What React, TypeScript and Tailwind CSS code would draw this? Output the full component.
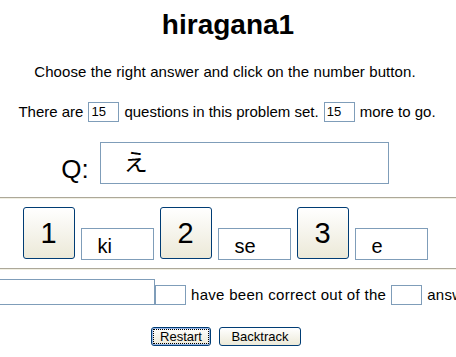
import React from "react";

const Box: React.FC<{ className?: string; children?: React.ReactNode }> = ({ className = "", children }) => (
  <div className={`shrink-0 border border-[#7f9db9] bg-white ${className}`}>{children}</div>
);

const NumButton: React.FC<{ n: number }> = ({ n }) => (
  <button className="mb-px flex h-[52px] w-[52px] shrink-0 items-center justify-center rounded-[3px] border border-[#003c74] bg-gradient-to-b from-white to-[#ece9d8] text-[29px] leading-none">
    {n}
  </button>
);

const Rule = () => <div className="h-[2px] border-t border-[#aca899] border-b border-b-[#f1efe2]" />;

export default function App() {
  const choices = [
    { n: 1, label: "ki" },
    { n: 2, label: "se" },
    { n: 3, label: "e" },
  ];

  return (
    <div className="h-[357px] w-[456px] overflow-hidden bg-white font-['Liberation_Sans',sans-serif] text-black">
      <h1 className="text-center text-[28px] font-bold leading-[50px]">hiragana1</h1>

      <p className="mt-[12px] pr-[6px] text-center text-[15px] leading-[20px] tracking-[0.1px]">
        Choose the right answer and click on the number button.
      </p>

      <div className="mt-[20px] flex h-[20px] items-center justify-center pr-[2px] text-[15px]">
        <span>There are</span>
        <Box className="mx-[5px] h-[20px] w-[31px] pl-[2px] text-[13px] leading-[18px]">15</Box>
        <span>questions in this problem set.</span>
        <Box className="mx-[5px] h-[20px] w-[31px] pl-[2px] text-[13px] leading-[18px]">15</Box>
        <span>more to go.</span>
      </div>

      <div className="mt-[20px] flex items-end justify-center gap-[11px] pr-[6px]">
        <span className="text-[26px] leading-[30px]">Q:</span>
        <Box className="h-[42px] w-[289px] pl-[23px] pt-[1px] font-['Noto_Sans_CJK_JP',sans-serif] text-[24px] leading-[34px]">
          え
        </Box>
      </div>

      <div className="mt-[13px]">
        <Rule />
      </div>

      <div className="mt-[8px] flex items-end justify-center gap-[6px] pr-[6px]">
        {choices.map((c) => (
          <React.Fragment key={c.n}>
            <NumButton n={c.n} />
            <Box className="h-[32px] w-[73px] pl-[16px] text-[20px] leading-[34px]">{c.label}</Box>
          </React.Fragment>
        ))}
      </div>

      <div className="mt-[8px]">
        <Rule />
      </div>

      <div className="mt-[9px] flex items-end whitespace-nowrap text-[15px] tracking-[0.3px]">
        <Box className="-ml-px h-[26px] w-[156px]" />
        <Box className="h-[20px] w-[31px]" />
        <span className="ml-[5px] leading-[20px]">have been correct out of the</span>
        <Box className="ml-[5px] h-[20px] w-[31px]" />
        <span className="ml-[5px] leading-[20px]">answered.</span>
      </div>

      <div className="mt-[22px] flex justify-center gap-[8px] pr-[4px] text-[13px]">
        <button className="h-[19px] w-[60px] rounded-[3px] border border-[#003c74] bg-gradient-to-b from-white to-[#ece9d8] p-[1px] leading-none shadow-[inset_0_0_0_1px_#98b8ea]">
          <span className="flex h-full w-full items-center justify-center border border-dotted border-black">Restart</span>
        </button>
        <button className="h-[19px] w-[82px] rounded-[3px] border border-[#003c74] bg-gradient-to-b from-white to-[#ece9d8] leading-none">
          Backtrack
        </button>
      </div>
    </div>
  );
}
